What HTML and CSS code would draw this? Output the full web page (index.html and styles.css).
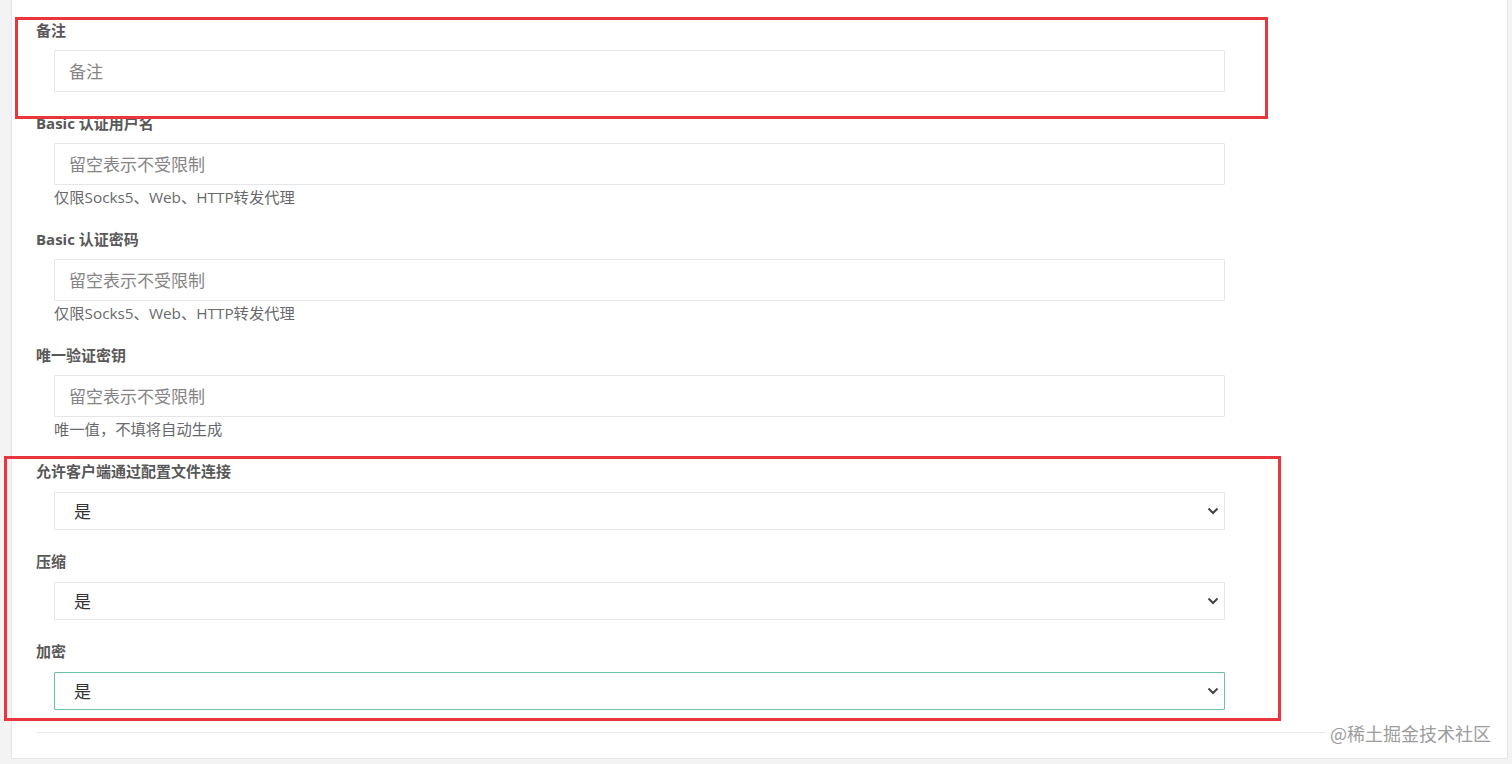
FILE: index.html
```html
<!DOCTYPE html>
<html lang="zh-CN">
<head>
<meta charset="utf-8">
<title>表单</title>
<link rel="stylesheet" href="styles.css">
</head>
<body>
<div class="page">
  <div class="panel">
    <form class="form">
      <div class="group">
        <label class="label">备注</label>
        <div class="field">
          <input class="input" type="text" placeholder="备注">
        </div>
      </div>
      <div class="group">
        <label class="label">Basic 认证用户名</label>
        <div class="field">
          <input class="input" type="text" placeholder="留空表示不受限制">
          <div class="help">仅限Socks5、Web、HTTP转发代理</div>
        </div>
      </div>
      <div class="group">
        <label class="label">Basic 认证密码</label>
        <div class="field">
          <input class="input" type="text" placeholder="留空表示不受限制">
          <div class="help">仅限Socks5、Web、HTTP转发代理</div>
        </div>
      </div>
      <div class="group">
        <label class="label">唯一验证密钥</label>
        <div class="field">
          <input class="input" type="text" placeholder="留空表示不受限制">
          <div class="help">唯一值，不填将自动生成</div>
        </div>
      </div>
      <div class="group">
        <label class="label">允许客户端通过配置文件连接</label>
        <div class="field select-wrap">
          <select class="select"><option>是</option><option>否</option></select>
          <svg class="chevron" width="12" height="8" viewBox="0 0 12 8"><path d="M1.5 1.5 L6 6 L10.5 1.5" fill="none" stroke="#444" stroke-width="2"/></svg>
        </div>
      </div>
      <div class="group">
        <label class="label">压缩</label>
        <div class="field select-wrap">
          <select class="select"><option>是</option><option>否</option></select>
          <svg class="chevron" width="12" height="8" viewBox="0 0 12 8"><path d="M1.5 1.5 L6 6 L10.5 1.5" fill="none" stroke="#444" stroke-width="2"/></svg>
        </div>
      </div>
      <div class="group">
        <label class="label">加密</label>
        <div class="field select-wrap">
          <select class="select select-focus"><option>是</option><option>否</option></select>
          <svg class="chevron" width="12" height="8" viewBox="0 0 12 8"><path d="M1.5 1.5 L6 6 L10.5 1.5" fill="none" stroke="#444" stroke-width="2"/></svg>
        </div>
      </div>
      <div class="divider"></div>
    </form>
  </div>
  <div class="mark mark-top"></div>
  <div class="mark mark-bottom"></div>
  <div class="watermark">@稀土掘金技术社区</div>
</div>
</body>
</html>
```
FILE: styles.css
```css
html, body {
  margin: 0;
  padding: 0;
  background: #f3f3f4;
  font-family: "Open Sans", "Noto Sans CJK SC", sans-serif;
}

.page {
  position: relative;
  width: 1512px;
  height: 764px;
  overflow: hidden;
}

.panel {
  margin-left: 11px;
  width: 1497px;
  height: 759px;
  background: #ffffff;
  border-left: 1px solid #e4e6e8;
  border-right: 1px solid #e4e6e8;
  border-bottom: 1px solid #e4e6e8;
  padding: 20px 24px 0 24px;
  box-sizing: border-box;
}

.form {
  display: flex;
  flex-direction: column;
}

.group {
  display: flex;
  flex-direction: column;
  margin-bottom: 21px;
}

.label {
  display: block;
  font-size: 15px;
  line-height: 20px;
  font-weight: 700;
  color: #585858;
  margin-bottom: 10px;
}

.field {
  margin-left: 18px;
  width: 1171px;
}

.input {
  display: block;
  box-sizing: border-box;
  width: 100%;
  height: 42px;
  border: 1px solid #e5e6e7;
  border-radius: 1px;
  padding: 0 14px;
  font-family: "Open Sans", "Noto Sans CJK SC", sans-serif;
  font-size: 17px;
  color: #333;
  background: #fff;
  outline: none;
}

.input::placeholder {
  color: #858585;
}

.help {
  margin-top: 1px;
  font-size: 15.3px;
  line-height: 22px;
  color: #676a6c;
}

.select-wrap {
  position: relative;
  margin-top: 1px;
}

.select {
  display: block;
  box-sizing: border-box;
  width: 100%;
  height: 38px;
  border: 1px solid #e5e6e7;
  border-radius: 1px;
  padding: 1px 40px 0 19px;
  font-family: "Open Sans", "Noto Sans CJK SC", sans-serif;
  font-size: 17px;
  color: #333;
  background: #fff;
  -webkit-appearance: none;
  appearance: none;
  outline: none;
}

.select-focus {
  border-color: #6cc3a3;
}

.chevron {
  position: absolute;
  right: 6px;
  top: 15px;
  pointer-events: none;
}

.divider {
  margin-top: 1px;
  height: 1px;
  background: #e7eaec;
}

.mark {
  position: absolute;
  border: 3px solid #e8363c;
  box-sizing: border-box;
}

.mark-top {
  left: 15px;
  top: 17px;
  width: 1253px;
  height: 102px;
}

.mark-bottom {
  left: 4px;
  top: 456px;
  width: 1277px;
  height: 265px;
}

.watermark {
  position: absolute;
  left: 1326px;
  top: 720px;
  padding: 0 4px;
  background: #fff;
  font-family: "Noto Sans CJK SC", sans-serif;
  font-size: 18px;
  line-height: 26px;
  color: #9c9c9c;
}
```
